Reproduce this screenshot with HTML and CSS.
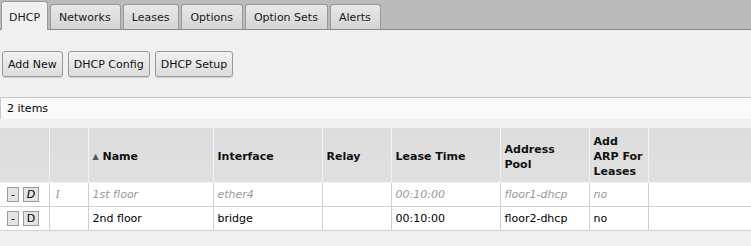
FILE: index.html
```html
<!DOCTYPE html>
<html>
<head>
<meta charset="utf-8">
<link rel="stylesheet" href="styles.css">
</head>
<body>
<div class="tabbar">
  <div class="tab active">DHCP</div>
  <div class="tab">Networks</div>
  <div class="tab">Leases</div>
  <div class="tab">Options</div>
  <div class="tab">Option Sets</div>
  <div class="tab">Alerts</div>
</div>
<div class="toolbar">
  <button class="btn">Add New</button>
  <button class="btn">DHCP Config</button>
  <button class="btn">DHCP Setup</button>
</div>
<div class="count">2 items</div>
<table class="grid">
  <colgroup>
    <col class="c1"><col class="c2"><col class="c3"><col class="c4"><col class="c5"><col class="c6"><col class="c7"><col class="c8"><col>
  </colgroup>
  <thead>
    <tr>
      <th></th><th></th>
      <th><span class="sort">&#9650;</span> Name</th>
      <th>Interface</th>
      <th>Relay</th>
      <th>Lease Time</th>
      <th>Address Pool</th>
      <th>Add ARP For Leases</th>
      <th></th>
    </tr>
  </thead>
  <tbody>
    <tr class="disabled">
      <td class="acts"><span class="sb">-</span><span class="sb wide it">D</span></td>
      <td class="flag">I</td>
      <td>1st floor</td>
      <td>ether4</td>
      <td></td>
      <td>00:10:00</td>
      <td>floor1-dhcp</td>
      <td>no</td>
      <td></td>
    </tr>
    <tr>
      <td class="acts"><span class="sb">-</span><span class="sb wide">D</span></td>
      <td></td>
      <td>2nd floor</td>
      <td>bridge</td>
      <td></td>
      <td>00:10:00</td>
      <td>floor2-dhcp</td>
      <td>no</td>
      <td></td>
    </tr>
  </tbody>
</table>
</body>
</html>
```
FILE: styles.css
```css
html, body {
  margin: 0;
  padding: 0;
  background: #f0f0f0;
  font-family: "DejaVu Sans", Verdana, sans-serif;
  font-size: 11px;
  color: #000;
}
.tabbar {
  background: #bbb;
  height: 29px;
  border-bottom: 1px solid #888;
  display: flex;
  align-items: flex-end;
  padding-left: 1px;
  gap: 2px;
}
.tab {
  height: 25px;
  box-sizing: border-box;
  border: 1px solid #999;
  border-bottom: none;
  border-radius: 3px 3px 0 0;
  background: linear-gradient(#e8e8e8, #d4d4d4);
  padding: 0 9px 0 8px;
  line-height: 25px;
  color: #1a1a1a;
}
.tab.active {
  height: 29px;
  margin-bottom: -1px;
  background: #f0f0f0;
  line-height: 31px;
  padding: 0 7px 0 7px;
}
.toolbar {
  display: flex;
  gap: 5px;
  padding: 21px 0 0 2px;
  height: 46px;
  box-sizing: border-box;
}
.btn {
  font: inherit;
  height: 26px;
  border: 1px solid #999;
  border-radius: 3px;
  background: linear-gradient(#f2f2f2, #dcdcdc);
  padding: 0 5px;
  color: #111;
  box-shadow: 0 1px 1px rgba(0,0,0,0.15);
}
.count {
  margin-top: 21px;
  height: 22px;
  line-height: 22px;
  box-sizing: border-box;
  background: #fafafa;
  border-top: 1px solid #c8c8c8;
  border-left: 1px solid #c8c8c8;
  padding-left: 6px;
}
.grid {
  margin-top: 9px;
  width: 100%;
  border-collapse: collapse;
  table-layout: fixed;
  box-shadow: 0 2px 2px rgba(0,0,0,0.15);
}
.c1 { width: 49px; }
.c2 { width: 39px; }
.c3 { width: 125px; }
.c4 { width: 109px; }
.c5 { width: 69px; }
.c6 { width: 109px; }
.c7 { width: 89px; }
.c8 { width: 59px; }
.grid th {
  height: 54px;
  box-sizing: border-box;
  background: linear-gradient(#dcdcdc, #e0e0e0);
  border: 1px solid #f2f2f2;
  border-top: none;
  text-align: left;
  font-weight: bold;
  padding: 4px 4px 0 4px;
  line-height: 15px;
  color: #111;
}
.sort { font-size: 8px; color: #555; font-weight: normal; vertical-align: 1px; }
.grid td {
  height: 24px;
  box-sizing: border-box;
  background: #fff;
  border: 1px solid #cfcfcf;
  padding: 0 4px;
  white-space: nowrap;
}
.grid tr td:first-child, .grid tr th:first-child { border-left: none; }
.grid tr td:last-child, .grid tr th:last-child { border-right: none; }
.disabled td { color: #999; font-style: italic; }
.grid td.flag { padding-left: 6px; font-family: "DejaVu Serif", serif; }
.grid td.acts { padding-left: 7px; }
.sb {
  display: inline-block;
  box-sizing: border-box;
  height: 15px;
  width: 12px;
  line-height: 13px;
  text-align: center;
  border: 1px solid #999;
  background: #e4e4e4;
  color: #000;
  font-style: normal;
  margin-right: 4px;
  vertical-align: middle;
}
.sb.wide { width: 16px; }
.sb.it { font-style: italic; }
```
